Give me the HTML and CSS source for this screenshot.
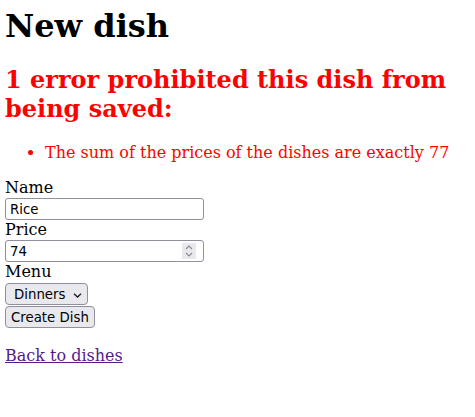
FILE: index.html
```html
<!DOCTYPE html>
<html>
<head>
<meta charset="utf-8">
<title>New dish</title>
<link rel="stylesheet" href="styles.css">
</head>
<body class="page">
<h1 class="title">New dish</h1>
<form class="dish-form">
  <div class="errors">
    <h2 class="errors-title">1 error prohibited this dish from being saved:</h2>
    <ul class="errors-list">
      <li>The sum of the prices of the dishes are exactly 77</li>
    </ul>
  </div>
  <div class="field">
    <label class="field-label" for="name">Name</label>
    <input class="text-input" type="text" id="name" value="Rice">
  </div>
  <div class="field">
    <label class="field-label" for="price">Price</label>
    <div class="number-wrap">
      <input class="text-input number-input" type="number" id="price" value="74">
      <span class="spinner">
        <svg width="14" height="16" viewBox="0 0 14 16" aria-hidden="true">
          <path d="M4 6 L7 3 L10 6" fill="none" stroke="#8a8a94" stroke-width="1.1"/>
          <path d="M4 10 L7 13 L10 10" fill="none" stroke="#8a8a94" stroke-width="1.1"/>
        </svg>
      </span>
    </div>
  </div>
  <div class="field">
    <label class="field-label" for="menu">Menu</label>
    <div class="select-wrap">
      <select class="select" id="menu"><option>Dinners</option></select>
      <svg class="select-arrow" width="9" height="5" viewBox="0 0 9 5" aria-hidden="true">
        <path d="M1 0.8 L4.5 4 L8 0.8" fill="none" stroke="#1a1a1a" stroke-width="1.3"/>
      </svg>
    </div>
  </div>
  <div class="actions">
    <button class="submit" type="button">Create Dish</button>
  </div>
</form>
<br>
<div class="back"><a class="back-link" href="#">Back to dishes</a></div>
</body>
</html>
```
FILE: styles.css
```css
.page {
  margin: 5px;
  font-family: "DejaVu Serif", serif;
  font-size: 16px;
}
.title {
  margin: 2px 0 0 0;
  font-size: 32px;
}
.errors {
  color: red;
}
.errors-title {
  font-size: 24px;
  margin: 20px 0;
}
.errors-list {
  margin: 16px 0;
  padding-left: 40px;
}
.field-label {
  display: block;
  line-height: 20px;
}
.text-input {
  display: block;
  width: 199px;
  height: 22px;
  box-sizing: border-box;
  margin: 0;
  padding: 1px 4px;
  border: 1px solid #8f8f9d;
  border-radius: 3px;
  background: #fff;
  color: #000;
  font-family: "DejaVu Sans", sans-serif;
  font-size: 13.33px;
}
.number-input {
  -moz-appearance: textfield;
  appearance: textfield;
}
.number-input::-webkit-inner-spin-button,
.number-input::-webkit-outer-spin-button {
  -webkit-appearance: none;
  margin: 0;
}
.number-wrap {
  position: relative;
  width: 199px;
}
.spinner {
  position: absolute;
  left: 177px;
  top: 3px;
  width: 14px;
  height: 16px;
  background: #e9e9ed;
  display: flex;
}
.select-wrap {
  position: relative;
  display: flex;
  margin-top: 1px;
}
.select {
  appearance: none;
  -webkit-appearance: none;
  height: 22px;
  box-sizing: border-box;
  margin: 0;
  padding: 0 18px 0 8px;
  border: 1px solid #8f8f9d;
  border-radius: 4px;
  background: #e9e9ed;
  color: #000;
  font-family: "DejaVu Sans", sans-serif;
  font-size: 13.33px;
  width: 83px;
}
.select-arrow {
  position: absolute;
  left: 68px;
  top: 10px;
}
.actions {
  display: flex;
  margin-top: 1px;
}
.submit {
  height: 22px;
  box-sizing: border-box;
  margin: 0;
  padding: 0 5px;
  border: 1px solid #8f8f9d;
  border-radius: 4px;
  background: #e9e9ed;
  color: #000;
  font-family: "DejaVu Sans", sans-serif;
  font-size: 13.33px;
}
.back {
  margin-top: -1px;
}
.back-link {
  color: #551a8b;
}
```
